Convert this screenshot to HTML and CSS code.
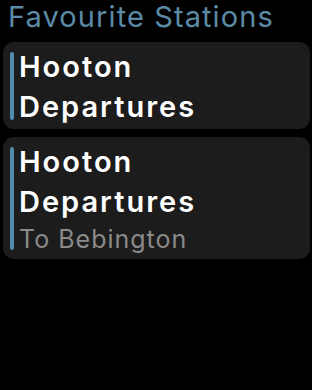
FILE: index.html
```html
<!DOCTYPE html>
<html lang="en">
<head>
    <meta charset="UTF-8">
    <meta name="viewport" content="width=device-width, initial-scale=1.0">
    <title>Favourite Stations</title>
    <link rel="stylesheet" href="styles.css">
</head>
<body>
    <h1 class="title">Favourite Stations</h1>

    <div class="list">
        <div class="card">
            <div class="bar"></div>
            <div class="info">
                <div class="name">Hooton Departures</div>
            </div>
        </div>
        <div class="card">
            <div class="bar"></div>
            <div class="info">
                <div class="name">Hooton Departures</div>
                <div class="sub">To Bebington</div>
            </div>
        </div>
    </div>
</body>
</html>
```

FILE: styles.css
```css
body {
    margin: 0;
    background: #000;
    font-family: Inter, "Noto Sans", sans-serif;
    width: 312px;
    height: 390px;
    overflow: hidden;
}
.title {
    margin: 0;
    padding: 0 0 0 8px;
    font-size: 29px;
    font-weight: 400;
    line-height: 34px;
    letter-spacing: 1.1px;
    color: #5b8aa6;
}
.list {
    display: flex;
    flex-direction: column;
    gap: 8px;
    padding: 8px 2px 0 3px;
}
.card {
    display: flex;
    gap: 5px;
    background: #1c1c1c;
    border-radius: 11px;
    padding: 5px 10px 2px 7px;
}
.bar {
    flex: none;
    width: 4px;
    margin: 5px 0 7px;
    border-radius: 2px;
    background: #4f8cad;
}
.info {
    display: flex;
    flex-direction: column;
}
.name {
    font-size: 29px;
    font-weight: 600;
    line-height: 40px;
    letter-spacing: 2px;
    color: #fff;
    width: 220px;
}
.sub {
    font-size: 25px;
    line-height: 35px;
    letter-spacing: 1px;
    color: #8a8a8a;
}
```
